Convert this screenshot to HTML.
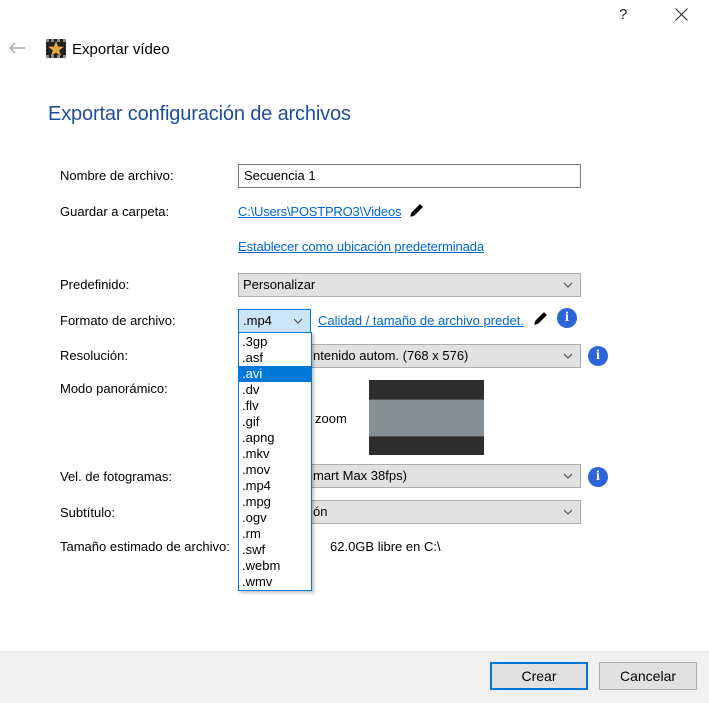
<!DOCTYPE html>
<html><head><meta charset="utf-8"><style>
*{margin:0;padding:0;box-sizing:border-box}
body{width:709px;height:703px;background:#fff;position:relative;overflow:hidden;font-family:"Liberation Sans",sans-serif;font-size:13px;color:#000}
.a{position:absolute;white-space:nowrap}
.lbl{position:absolute;left:60px;line-height:16px;top:1px}
.sel{position:absolute;left:238px;width:343px;height:24px;background:#e1e1e1;border:1px solid #adadad;padding-left:4px;line-height:22px}
.chev{position:absolute;right:8px;top:7px;width:8px;height:8px}
.lnk{color:#0066cc;text-decoration:underline;position:absolute;line-height:16px}
.info{position:absolute;width:20px;height:20px;border-radius:50%;background:#2f64d6;color:#fff;font:bold 14px "Liberation Serif",serif;text-align:center;line-height:20px}
.dd div{height:16px;line-height:16px;padding-left:3px}
</style></head><body>
<div class="a" style="left:619px;top:6px;font-size:15px;color:#222">?</div>
<svg class="a" style="left:675px;top:8px" width="13" height="13"><path d="M0.5 0.5L12.5 12.5M12.5 0.5L0.5 12.5" stroke="#222" stroke-width="1"/></svg>
<svg class="a" style="left:9px;top:42px" width="17" height="12"><path d="M1 6H16M6 1L1 6L6 11" stroke="#aaa" stroke-width="1.5" fill="none"/></svg>
<div class="a" style="left:46px;top:39px;width:20px;height:19px;background:#222;border-top:3px dotted #888;border-bottom:3px dotted #888"></div>
<svg class="a" style="left:48px;top:41px" width="16" height="15"><path d="M8 0L10 5.5L16 5.7L11.2 9.3L13 15L8 11.6L3 15L4.8 9.3L0 5.7L6 5.5Z" fill="#e8a63a"/></svg>
<div class="a" style="left:72px;top:40px;font-size:15px;line-height:20px">Exportar vídeo</div>
<div class="a" style="left:48px;top:102px;font-size:20px;line-height:24px;color:#1f4e9c;letter-spacing:-0.15px">Exportar configuración de archivos</div>

<div class="lbl" style="top:168px">Nombre de archivo:</div>
<div class="a" style="left:238px;top:164px;width:343px;height:24px;border:1px solid #7a7a7a;padding-left:5px;line-height:22px">Secuencia 1</div>
<div class="lbl" style="top:204px">Guardar a carpeta:</div>
<div class="lnk" style="left:238px;top:204px;letter-spacing:-0.2px">C:\Users\POSTPRO3\Videos</div>
<svg class="a" style="left:408px;top:202px" width="16" height="16"><path d="M3 14L4 11L12 3L14 5L6 13Z" fill="#000" stroke="#000" stroke-width="1.3" stroke-linejoin="round"/></svg>
<div class="lnk" style="left:238px;top:239px;letter-spacing:-0.1px">Establecer como ubicación predeterminada</div>

<div class="lbl" style="top:277px">Predefinido:</div>
<div class="sel" style="top:273px">Personalizar<svg class="chev" viewBox="0 0 8 8"><path d="M0 2L4 6L8 2" stroke="#444" fill="none"/></svg></div>

<div class="lbl" style="top:313px">Formato de archivo:</div>
<div class="sel" style="top:309px;width:73px;background:#cce4f7;border-color:#0078d7">.mp4<svg class="chev" viewBox="0 0 8 8"><path d="M0 2L4 6L8 2" stroke="#444" fill="none"/></svg></div>
<div class="lnk" style="left:318px;top:313px">Calidad / tamaño de archivo predet.</div>
<svg class="a" style="left:532px;top:310px" width="16" height="16"><path d="M3 14L4 11L12 3L14 5L6 13Z" fill="#000" stroke="#000" stroke-width="1.3" stroke-linejoin="round"/></svg>
<div class="info" style="left:557px;top:308px">i</div>

<div class="lbl" style="top:348px">Resolución:</div>
<div class="sel" style="top:344px"><span style="position:absolute;left:74px">ntenido autom. (768 x 576)</span><svg class="chev" viewBox="0 0 8 8"><path d="M0 2L4 6L8 2" stroke="#444" fill="none"/></svg></div>
<div class="info" style="left:588px;top:346px">i</div>

<div class="lbl" style="top:381px">Modo panorámico:</div>
<div class="a" style="left:315px;top:411px">zoom</div>
<div class="a" style="left:369px;top:380px;width:115px;height:75px;background:#2d2d2d"><div style="margin-top:19px;height:38px;background:#878e94;border-top:1px solid #555;border-bottom:1px solid #555"></div></div>

<div class="lbl" style="top:469px">Vel. de fotogramas:</div>
<div class="sel" style="top:464px"><span style="position:absolute;left:74px">mart Max 38fps)</span><svg class="chev" viewBox="0 0 8 8"><path d="M0 2L4 6L8 2" stroke="#444" fill="none"/></svg></div>
<div class="info" style="left:588px;top:467px">i</div>

<div class="lbl" style="top:505px">Subtítulo:</div>
<div class="sel" style="top:500px"><span style="position:absolute;left:74px">ón</span><svg class="chev" viewBox="0 0 8 8"><path d="M0 2L4 6L8 2" stroke="#444" fill="none"/></svg></div>

<div class="lbl" style="top:539px">Tamaño estimado de archivo:</div>
<div class="a" style="left:330px;top:539px;line-height:16px">62.0GB libre en C:\</div>

<div class="a dd" style="left:238px;top:332px;width:74px;height:259px;background:#fff;border:1px solid #0078d7;box-shadow:2px 2px 3px rgba(0,0,0,.25);padding-top:1px">
<div>.3gp</div><div>.asf</div><div style="background:#0078d7;color:#fff">.avi</div><div>.dv</div><div>.flv</div><div>.gif</div><div>.apng</div><div>.mkv</div><div>.mov</div><div>.mp4</div><div>.mpg</div><div>.ogv</div><div>.rm</div><div>.swf</div><div>.webm</div><div>.wmv</div>
</div>

<div class="a" style="left:0;top:651px;width:709px;height:52px;background:#f0f0f0;border-top:1px solid #dfdfdf"></div>
<div class="a" style="left:490px;top:662px;width:98px;height:28px;background:#e1e1e1;border:2px solid #0078d7;text-align:center;line-height:24px;font-size:14px">Crear</div>
<div class="a" style="left:599px;top:662px;width:98px;height:28px;background:#e1e1e1;border:1px solid #adadad;text-align:center;line-height:26px;font-size:14px">Cancelar</div>
</body></html>
